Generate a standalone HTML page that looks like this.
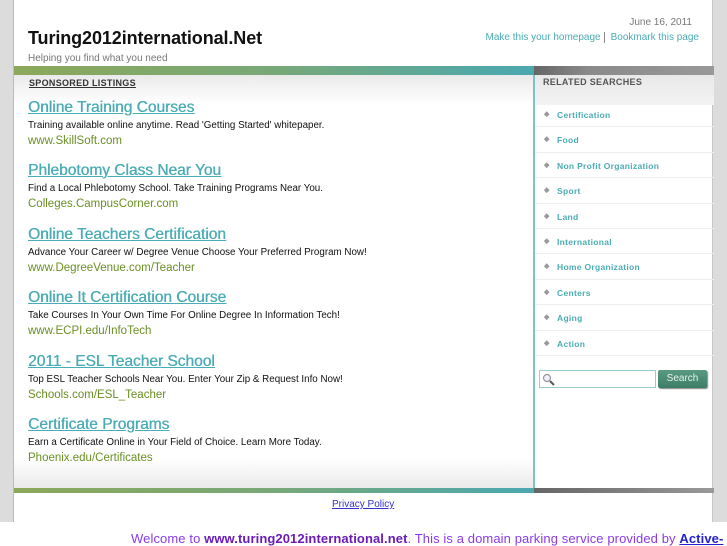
<!DOCTYPE html>
<html><head><meta charset="utf-8"><style>
*{margin:0;padding:0;box-sizing:border-box}
body{width:727px;height:545px;background:#fff;font-family:"Liberation Sans",sans-serif;position:relative;overflow:hidden}
.bg{position:absolute;left:0;top:0;width:727px;height:522px;background:#dcdcdc}
.page{position:absolute;left:13px;top:0;width:700px;height:522px;background:#fff;border-left:1px solid #bbb;border-right:1px solid #c8c8c8}
.abs{position:absolute}
.title{left:14px;top:28px;font-size:18px;font-weight:bold;color:#111;letter-spacing:-0.1px}
.tag{left:14px;top:53px;font-size:10px;color:#777}
.date{right:20px;top:17px;font-size:10px;color:#777}
.links{right:13px;top:32px;font-size:10px;color:#4aacb4}
.links span{padding:0 3px}
.bar1{left:0;top:66px;width:520px;height:9px;background:linear-gradient(90deg,#8ca85a,#78a878 50%,#4aa8b0)}
.bar1g{left:520px;top:66px;width:180px;height:9px;background:linear-gradient(90deg,#666,#8a8a8a 30%,#999)}
.fade{left:0;top:75px;width:519px;height:30px;background:linear-gradient(#eaeaea,#fff)}
.spons{left:15px;top:78px;font-size:9px;font-weight:bold;color:#333;text-decoration:underline;letter-spacing:.3px}
.side{left:519px;top:75px;width:181px;height:413px;border-left:2px solid #7cc4c4}
.sidehead{position:absolute;left:0;top:0;width:100%;height:30px;background:linear-gradient(#e8e8e8,#f3f3f3)}
.sidehead b{position:absolute;left:8px;top:2px;font-size:9px;color:#555;letter-spacing:.3px}
.side ul{position:absolute;left:0;top:27px;width:179px;list-style:none}
.side li{height:25.4px;border-bottom:1px solid #eee;font-size:8.5px;font-weight:bold;color:#4aacb4;padding:8px 0 0 22px;position:relative;letter-spacing:.3px}
.side li:before{content:"◆";position:absolute;left:9px;top:8px;color:#999;font-size:7px}
.sbox{position:absolute;left:4px;top:295px;width:117px;height:18px;border:1px solid #9cc;background:#fff}
.sbtn{position:absolute;left:123px;top:295px;width:49px;height:18px;background:linear-gradient(#5a9a82,#3e7d66);border-radius:2px;color:#e8f5ef;font-size:10px;text-align:center;line-height:17px;box-shadow:1px 1px 1px #888}
.ad{left:14px;position:absolute}
.ad a{display:block;font-size:15.5px;color:#4aacb4;text-decoration:underline;text-shadow:0.4px 0 0 #4aacb4}
.ad p{font-size:9.8px;color:#111;margin-top:3px}
.ad i{display:block;font-style:normal;font-size:11.5px;color:#6a8f24;margin-top:4px}
.bfade{left:0;top:458px;width:519px;height:30px;background:linear-gradient(#fff,#eaeaea)}
.bar2{left:0;top:488px;width:520px;height:5px;background:linear-gradient(90deg,#8ca85a,#78a878 50%,#4aa8b0)}
.bar2g{left:520px;top:488px;width:180px;height:5px;background:linear-gradient(90deg,#666,#999)}
.priv{left:318px;top:499px;font-size:10px;color:#33c;text-decoration:underline}
.welcome{position:absolute;left:131px;top:531px;font-size:13px;color:#8a3be8;white-space:nowrap;letter-spacing:0.1px}
.welcome b{color:#6a1bb8}
.welcome u{color:#22c;font-weight:bold}
</style></head><body>
<div class="bg"></div>
<div class="page">
<div class="abs title">Turing2012international.Net</div>
<div class="abs tag">Helping you find what you need</div>
<div class="abs date">June 16, 2011</div>
<div class="abs links">Make this your homepage<span style="border-left:1px solid #888;margin-left:3px"></span>Bookmark this page</div>
<div class="abs bar1"></div><div class="abs bar1g"></div>
<div class="abs fade"></div>
<div class="abs spons">SPONSORED LISTINGS</div>
<div class="abs bfade"></div>
<div class="ad" style="top:99px"><a>Online Training Courses</a><p>Training available online anytime. Read 'Getting Started' whitepaper.</p><i>www.SkillSoft.com</i></div>
<div class="ad" style="top:162px"><a>Phlebotomy Class Near You</a><p>Find a Local Phlebotomy School. Take Training Programs Near You.</p><i>Colleges.CampusCorner.com</i></div>
<div class="ad" style="top:226px"><a>Online Teachers Certification</a><p>Advance Your Career w/ Degree Venue Choose Your Preferred Program Now!</p><i>www.DegreeVenue.com/Teacher</i></div>
<div class="ad" style="top:289px"><a>Online It Certification Course</a><p>Take Courses In Your Own Time For Online Degree In Information Tech!</p><i>www.ECPI.edu/InfoTech</i></div>
<div class="ad" style="top:353px"><a>2011 - ESL Teacher School</a><p>Top ESL Teacher Schools Near You. Enter Your Zip &amp; Request Info Now!</p><i>Schools.com/ESL_Teacher</i></div>
<div class="ad" style="top:416px"><a>Certificate Programs</a><p>Earn a Certificate Online in Your Field of Choice. Learn More Today.</p><i>Phoenix.edu/Certificates</i></div>
<div class="abs side"><div class="sidehead"><b>RELATED SEARCHES</b></div>
<ul><li>Certification</li><li>Food</li><li>Non Profit Organization</li><li>Sport</li><li>Land</li><li>International</li><li>Home Organization</li><li>Centers</li><li>Aging</li><li>Action</li></ul>
<div class="sbox"><svg width="14" height="14" style="position:absolute;left:2px;top:2px"><circle cx="5" cy="5" r="3.5" fill="#eef" stroke="#999" stroke-width="1.2"/><line x1="8" y1="8" x2="12" y2="12" stroke="#555" stroke-width="2"/></svg></div>
<div class="sbtn">Search</div></div>
<div class="abs bar2"></div><div class="abs bar2g"></div>
<div class="abs priv">Privacy Policy</div>
</div>
<div class="welcome">Welcome to <b>www.turing2012international.net</b>. This is a domain parking service provided by <u>Active-</u></div>
</body></html>
